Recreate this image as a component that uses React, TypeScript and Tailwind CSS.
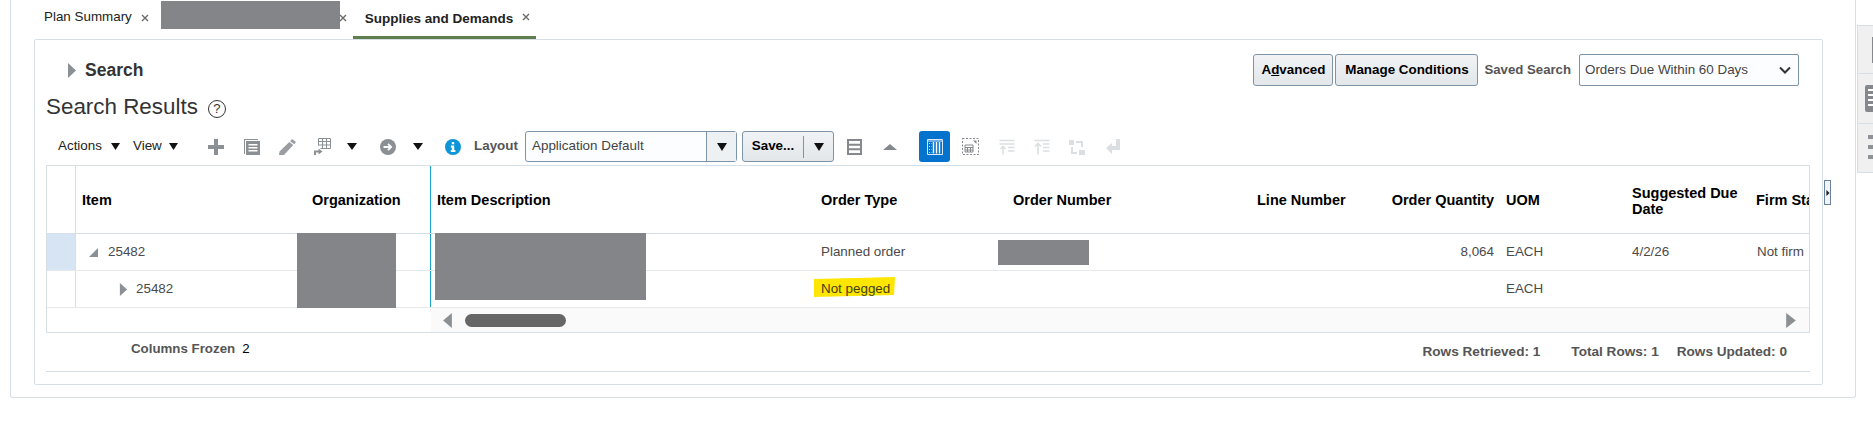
import type { ReactNode } from 'react'

const COLS = 'grid grid-cols-[29px_230px_125px_383px_192px_245px_124px_125px_125px_124px_60px]'

function Tri({ dir = 'down', className = '' }: { dir?: 'down' | 'up' | 'right' | 'left'; className?: string }) {
  const points = {
    down: '0,0 10,0 5,8',
    up: '0,8 10,8 5,0',
    right: '1,0 9,5 1,10',
    left: '9,0 1,5 9,10',
  }[dir]
  const box = dir === 'down' || dir === 'up' ? '0 0 10 8' : '0 0 10 10'
  return (
    <svg viewBox={box} preserveAspectRatio="none" className={className} fill="currentColor">
      <polygon points={points} />
    </svg>
  )
}

function Close() {
  return (
    <svg viewBox="0 0 8 8" className="w-[8px] h-[8px] text-[#6b6b6b]" stroke="currentColor" strokeWidth="1.4">
      <path d="M1 1l6 6M7 1l-6 6" />
    </svg>
  )
}

function Btn({ children, className = '' }: { children: ReactNode; className?: string }) {
  return (
    <div className={`h-[32px] flex items-center justify-center bg-gradient-to-b from-[#f1f3f5] to-[#e3e7ea] border border-[#7d93a8] rounded-[3px] font-bold text-[13.4px] text-black ${className}`}>
      {children}
    </div>
  )
}

function PlusIcon() {
  return (
    <svg viewBox="0 0 16 16" className="w-[16px] h-[16px] ml-[30px] text-[#8b9094]" fill="currentColor">
      <path d="M6 0h4v6h6v4h-6v6H6v-6H0V6h6z" />
    </svg>
  )
}

function DocIcon() {
  return (
    <svg viewBox="0 0 16 16" className="w-[16px] h-[16px] ml-[20px] text-[#8b9094]" fill="currentColor">
      <path d="M0 0h14v1H1v14H0z" />
      <path fillRule="evenodd" d="M2 2h14v14H2zm2.500 3v1.500h9V5zm0 3v1.500h9V8zm0 3v1.500h9V11z" />
    </svg>
  )
}

function PencilIcon() {
  return (
    <svg viewBox="0 0 18 16" className="w-[18px] h-[16px] ml-[19px] text-[#9a9ea2]" fill="currentColor">
      <path d="M13 0l4 3-1.800 2.200-4-3zM10.300 3l4 3L5 16l-5 0 .5-3.500z" />
    </svg>
  )
}

function ImportIcon() {
  return (
    <svg viewBox="0 0 17 18" className="w-[17px] h-[18px] ml-[17px] text-[#8b9094]" fill="none" stroke="currentColor">
      <path d="M4.500 .5h12v10h-10M4.500 .5v7M4.500 3.500h12M4.500 7h12M8.500 .5v10M12.500 .5v10" />
      <path d="M1 17v-3.500h5" strokeWidth="2" />
      <path d="M4.500 10.500l4 3-4 3z" fill="currentColor" stroke="none" />
    </svg>
  )
}

function ArrowIcon() {
  return (
    <svg viewBox="0 0 16 16" className="w-[16px] h-[16px] ml-[23px]">
      <circle cx="8" cy="8" r="8" fill="#8b9094" />
      <path d="M3.500 8h7M8 4.800L11.200 8 8 11.200" fill="none" stroke="#fff" strokeWidth="1.800" />
    </svg>
  )
}

function InfoIcon() {
  return (
    <svg viewBox="0 0 16 16" className="w-[16px] h-[16px] ml-[22px]">
      <circle cx="8" cy="8" r="8" fill="#0d95d8" />
      <path d="M6.800 3h2.400v2.200H6.800zM5.800 6.500h3.400v4.500h1.200v2H5.800v-2h1V8.400h-1z" fill="#fff" />
    </svg>
  )
}

function ListIcon() {
  return (
    <svg viewBox="0 0 15 16" className="w-[15px] h-[16px] ml-[13px] text-[#85898d]" fill="none" stroke="currentColor" strokeWidth="2">
      <path d="M1 1h13v14H1zM1 5.700h13M1 10.300h13" />
    </svg>
  )
}

function ColumnsIcon() {
  return (
    <svg viewBox="0 0 16 16" className="w-[16px] h-[16px]" fill="none" stroke="#dbe9f7">
      <path d="M.5 .5h15v15H.5z" />
      <path d="M1 2h14" />
      <path d="M6.500 3v11.500M9.500 3v11.500M12.500 3v11.500" stroke="#fff" strokeWidth="1.400" />
      <path d="M2 4.500h2.500M2 7.500h2.500M2 10.500h2.500M2 13.500h2.500" strokeDasharray="1 1" />
    </svg>
  )
}

function DetachIcon() {
  return (
    <svg viewBox="0 0 17 17" className="w-[17px] h-[17px] ml-[12px] text-[#85898d]" fill="none" stroke="currentColor">
      <path d="M.5 .5h16v16H.5z" strokeDasharray="2 1.500" />
      <path d="M3 7h8v7H3zM3 9.500h8M3 12h8M5.500 9.500V14M8.500 9.500V14" />
      <path d="M11 2.500h3.500V6z" fill="currentColor" stroke="none" />
    </svg>
  )
}

function SortDownIcon({ className = '' }: { className?: string }) {
  return (
    <svg viewBox="0 0 16 16" className={`w-[16px] h-[16px] text-[#dcdfe1] ${className}`} fill="none" stroke="currentColor" strokeWidth="1.300">
      <path d="M.5 1.500h15M.5 5h15M9 8.500h6.500M9 12h6.500" />
      <path d="M4 15.500V8M1.500 10L4 7.500 6.500 10" strokeWidth="1.600" />
    </svg>
  )
}

function SortUpIcon({ className = '' }: { className?: string }) {
  return (
    <svg viewBox="0 0 16 16" className={`w-[16px] h-[16px] text-[#dcdfe1] ${className}`} fill="none" stroke="currentColor" strokeWidth="1.300">
      <path d="M.5 1.500h15M9 5h6.500M9 8.500h6.500M9 12h6.500" />
      <path d="M4 15.500V4.500M1 7.500L4 4.500 7 7.500" strokeWidth="1.600" />
    </svg>
  )
}

function SwapIcon() {
  return (
    <svg viewBox="0 0 16 16" className="w-[16px] h-[16px] ml-[19px] text-[#dcdfe1]" fill="currentColor">
      <path d="M0 1h5v5H0zM10 11h6v5h-6zM7 2h7v6h-2V4H7zM2 8h2v5h4v2H2z" />
    </svg>
  )
}

function ReturnIcon() {
  return (
    <svg viewBox="0 0 14 16" className="w-[14px] h-[16px] ml-[21px] text-[#dcdfe1]" fill="currentColor">
      <path d="M10 0h4v11H6v4L0 9l6-5v3h4z" />
    </svg>
  )
}

function Cell({ children, className = '' }: { children?: ReactNode; className?: string }) {
  return <div className={`min-w-0 relative flex items-center whitespace-nowrap ${className}`}>{children}</div>
}

function HeaderRow() {
  return (
    <div className={`${COLS} h-[68px] pb-0 border-b border-[#d6dfe6] font-bold text-[14.5px] text-black`}>
      <Cell className="border-r border-[#d6dfe6]" />
      <Cell className="pl-[6px] pt-[2px]">Item</Cell>
      <Cell className="pl-[6px] pt-[2px] border-r border-[#19a5c9]">Organization</Cell>
      <Cell className="pl-[6px] pt-[2px]">Item Description</Cell>
      <Cell className="pl-[7px] pt-[2px]">Order Type</Cell>
      <Cell className="pl-[7px] pt-[2px]">Order Number</Cell>
      <Cell className="pl-[6px] pt-[2px]">Line Number</Cell>
      <Cell className="justify-end pr-[6px] pt-[2px]">Order Quantity</Cell>
      <Cell className="pl-[6px] pt-[2px]">UOM</Cell>
      <Cell className="pl-[7px] pt-[2px] leading-[16px]">
        <span>
          Suggested Due
          <br />
          Date
        </span>
      </Cell>
      <Cell className="pl-[7px] pt-[2px]">Firm Status</Cell>
    </div>
  )
}

function DataRow({ selected, item, orderType, qty, firm }: {
  selected?: boolean
  item: ReactNode
  orderType: ReactNode
  qty?: string
  firm?: boolean
}) {
  return (
    <div className={`${COLS} h-[37px] border-b border-[#e5e9ec] text-[13.4px] text-[#4a4a4a]`}>
      <Cell className={`border-r border-[#d6dfe6] ${selected ? 'bg-[#d6e4f3]' : ''}`} />
      <Cell className="pt-[1px]">{item}</Cell>
      <Cell className="border-r border-[#19a5c9]" />
      <Cell />
      <Cell className="pl-[7px] pt-[1px]">{orderType}</Cell>
      <Cell />
      <Cell />
      <Cell className="justify-end pr-[6px] pt-[1px]">{qty}</Cell>
      <Cell className="pl-[6px] pt-[1px]">EACH</Cell>
      <Cell className="pl-[7px] pt-[1px]">{firm ? '4/2/26' : ''}</Cell>
      <Cell className="pl-[8px] pt-[1px]">{firm ? 'Not firm' : ''}</Cell>
    </div>
  )
}

export default function App() {
  return (
    <div className="w-[1873px] h-[426px] bg-white flex items-start overflow-hidden font-['Liberation_Sans',Arial,sans-serif]">
      <div className="ml-[10px] w-[1846px] h-[398px] border-x border-b border-[#d6dfe6] rounded-b-[3px]">
        {/* Tabs */}
        <div className="h-[39px] flex items-start pl-[33px] text-[13.4px] text-[#333]">
          <div className="h-[35px] flex items-center gap-[9px] text-[#222]">
            Plan Summary
            <Close />
          </div>
          <div className="ml-[12px] mt-[1px] w-[179px] h-[28px] bg-[#848589]" />
          <div className="h-[35px] flex items-center ml-[-1px]">
            <Close />
          </div>
          <div className="ml-[6px] h-[39px] w-[183px] pl-[12px] border-b-[3px] border-[#5f7d4f] flex items-start gap-[9px] font-bold text-[13.5px] text-[#222]">
            <span className="mt-[9px]">Supplies and Demands</span>
            <div className="mt-[13px]">
              <Close />
            </div>
          </div>
        </div>

        {/* Card */}
        <div className="relative ml-[23px] w-[1789px] h-[346px] border border-[#d6dfe6] rounded-[2px]">
          <div className="mt-[14px] pl-[32px] pr-[23px] h-[32px] flex items-center pt-0">
            <Tri dir="right" className="w-[10px] h-[15px] text-[#8b9094]" />
            <span className="ml-[8px] font-bold text-[17.5px] text-[#333]">Search</span>
            <div className="ml-auto flex items-center">
              <Btn className="w-[80px]">
                <span>A<span className="underline">d</span>vanced</span>
              </Btn>
              <Btn className="w-[143px] ml-[2px]">Manage Conditions</Btn>
              <span className="ml-[6px] font-bold text-[13.2px] text-[#555]">Saved Search</span>
              <div className="ml-[8px] w-[220px] h-[32px] bg-[#fcfdfe] border border-[#7d93a8] rounded-[2px] flex items-center pl-[5px] pr-[7px] text-[13.4px] text-[#444]">
                Orders Due Within 60 Days
                <svg viewBox="0 0 12 8" className="ml-auto w-[12px] h-[8px] text-[#333]" fill="none" stroke="currentColor" strokeWidth="2">
                  <path d="M1 1.500l5 5 5-5" />
                </svg>
              </div>
            </div>
          </div>

          <div className="h-[42px] pl-[11px] flex items-center">
            <h1 className="font-normal text-[22.400px] text-[#333]">Search Results</h1>
            <div className="ml-[10px] mt-[3px] w-[18px] h-[18px] rounded-full border-[1.500px] border-[#333] flex items-center justify-center text-[13px] text-[#333]">
              ?
            </div>
          </div>

          {/* Toolbar */}
          <div className="mt-[3px] pl-[23px] h-[31px] flex items-center text-[13.4px] text-[#222]">
            <span className="w-[44px]">Actions</span>
            <Tri className="ml-[9px] w-[9px] h-[7px] text-[#111]" />
            <span className="ml-[13px] w-[29px]">View</span>
            <Tri className="ml-[7px] w-[9px] h-[7px] text-[#111]" />
            <PlusIcon />
            <DocIcon />
            <PencilIcon />
            <ImportIcon />
            <Tri className="ml-[16px] w-[10px] h-[7px] text-[#111]" />
            <ArrowIcon />
            <Tri className="ml-[17px] w-[10px] h-[7px] text-[#111]" />
            <InfoIcon />
            <span className="ml-[13px] w-[44px] font-bold text-[#555]">Layout</span>
            <div className="ml-[7px] w-[212px] h-[31px] bg-[#fcfdfe] border border-[#7d93a8] rounded-[3px] flex items-center text-[#444]">
              <span className="pl-[6px] flex-1">Application Default</span>
              <div className="w-[30px] h-full border-l border-[#7d93a8] bg-[#eef1f3] flex items-center justify-center">
                <Tri className="w-[10px] h-[8px] text-[#111]" />
              </div>
            </div>
            <div className="ml-[5px] w-[92px] h-[31px] bg-gradient-to-b from-[#f1f3f5] to-[#e3e7ea] border border-[#7d93a8] rounded-[3px] flex items-center font-bold text-black">
              <span className="w-[60px] text-center">Save...</span>
              <div className="h-[22px] border-l border-[#7d93a8]" />
              <div className="flex-1 flex items-center justify-center">
                <Tri className="w-[10px] h-[8px] text-[#111]" />
              </div>
            </div>
            <ListIcon />
            <Tri dir="up" className="ml-[21px] w-[14px] h-[6px] text-[#85898d]" />
            <div className="ml-[22px] w-[31px] h-[31px] bg-[#0572ce] rounded-[3px] flex items-center justify-center">
              <ColumnsIcon />
            </div>
            <DetachIcon />
            <SortDownIcon className="ml-[20px]" />
            <SortUpIcon className="ml-[19px]" />
            <SwapIcon />
            <ReturnIcon />
          </div>

          {/* Table */}
          <div className="relative mt-[3px] ml-[11px] w-[1764px] h-[168px] border border-[#d6dfe6] overflow-hidden">
            <HeaderRow />
            <DataRow
              selected
              qty="8,064"
              firm
              orderType="Planned order"
              item={
                <div className="flex items-center">
                  <svg viewBox="0 0 9 9" className="ml-[13px] w-[9px] h-[9px] text-[#8b9094]" fill="currentColor">
                    <polygon points="9,0 9,9 0,9" />
                  </svg>
                  <span className="ml-[10px]">25482</span>
                </div>
              }
            />
            <DataRow
              orderType={
                <>
                  <svg viewBox="0 0 81 20" className="absolute left-0 top-[6px] w-[81px] h-[20px]" fill="#ffe600">
                    <polygon points="0,2 81,0 80,18 0,20" />
                  </svg>
                  <span className="relative text-[#3f3f1a]">Not pegged</span>
                </>
              }
              item={
                <div className="flex items-center">
                  <Tri dir="right" className="ml-[43px] w-[9px] h-[13px] text-[#8b9094]" />
                  <span className="ml-[8px]">25482</span>
                </div>
              }
            />
            {/* Scrollbar */}
            <div className="flex h-[24px]">
              <div className="w-[384px]" />
              <div className="flex-1 bg-[#fafafa] flex items-center">
                <Tri dir="left" className="ml-[11px] w-[11px] h-[15px] text-[#8b9094]" />
                <div className="ml-[12px] w-[101px] h-[13px] rounded-full bg-[#666]" />
                <Tri dir="right" className="ml-auto mr-[12px] w-[12px] h-[15px] text-[#8b9094]" />
              </div>
            </div>

            {/* Redacted blocks */}
            <div className="absolute left-[250px] top-[67px] w-[99px] h-[75px] bg-[#848589]" />
            <div className="absolute left-[388px] top-[67px] w-[211px] h-[67px] bg-[#848589]" />
            <div className="absolute left-[951px] top-[74px] w-[91px] h-[25px] bg-[#848589]" />
          </div>

          {/* Footer */}
          <div className="ml-[11px] w-[1764px] h-[39px] border-b border-[#d6dfe6] flex items-start font-bold text-[13.300px] text-[#555]">
            <div className="ml-[85px] mt-[6px] flex gap-[7px]">
              Columns Frozen
              <span className="font-normal text-black">2</span>
            </div>
            <div className="ml-auto mr-[23px] mt-[9px] flex text-[13.600px]">
              <span>Rows Retrieved: 1</span>
              <span className="ml-[31px]">Total Rows: 1</span>
              <span className="ml-[18px]">Rows Updated: 0</span>
            </div>
          </div>

          {/* Panel splitter handle */}
          <div className="absolute top-[140px] right-[-9px] w-[7px] h-[25px] bg-[#f1f4f7] border border-[#6b8299] flex items-center justify-center">
            <Tri dir="right" className="w-[4px] h-[6px] text-[#222]" />
          </div>
        </div>
      </div>

      {/* Side tabs */}
      <div className="ml-[1px] mt-[25px] w-[16px] h-[148px] bg-[#f0f0f0] border-l border-y border-[#d6dfe6] flex flex-col">
        <div className="h-[48px] border-b border-[#d6dfe6] pl-[14px] pt-[11px]">
          <div className="w-[2px] h-[26px] bg-[#85898d]" />
        </div>
        <div className="h-[50px] border-b border-[#d6dfe6] pl-[7px] pt-[11px]">
          <div className="w-[9px] h-[27px] bg-[#85898d] rounded-l-[2px] flex flex-col gap-[3px] pl-[3px] pt-[4px]">
            <div className="h-[2px] bg-white" />
            <div className="h-[2px] bg-white" />
            <div className="h-[2px] bg-white" />
            <div className="h-[2px] bg-white" />
          </div>
        </div>
        <div className="pl-[10px] pt-[11px] flex flex-col gap-[6px]">
          <div className="w-[5px] h-[4px] bg-[#8f9397]" />
          <div className="w-[5px] h-[4px] bg-[#8f9397]" />
          <div className="w-[5px] h-[4px] bg-[#8f9397]" />
        </div>
      </div>
    </div>
  )
}
